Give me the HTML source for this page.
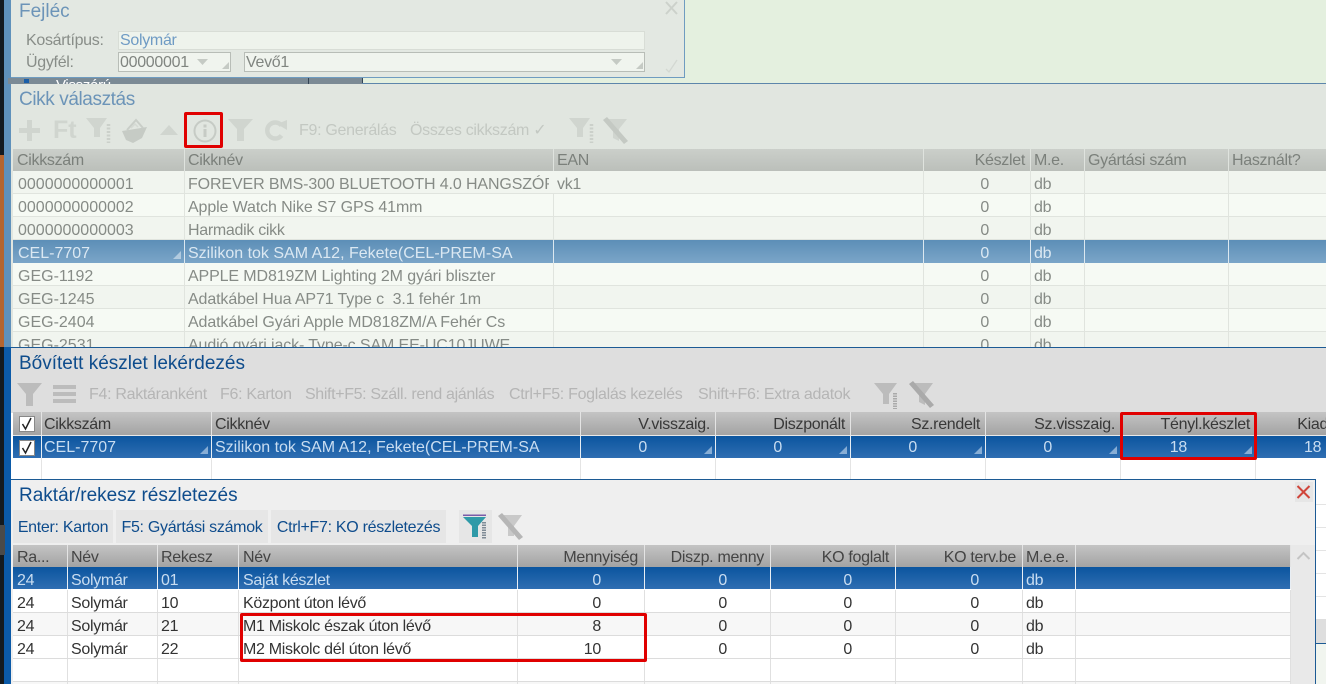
<!DOCTYPE html>
<html lang="hu"><head><meta charset="utf-8"><title>Készlet</title>
<style>
html,body{margin:0;padding:0;width:1326px;height:684px;overflow:hidden;background:#fff}
body{position:relative;font-family:"Liberation Sans",Arial,sans-serif;font-size:16px;letter-spacing:-.3px}
.a{position:absolute;white-space:nowrap}
.r{position:absolute;display:grid;box-sizing:border-box;line-height:27px;grid-template-rows:minmax(0,1fr)}
.r>div{position:relative;padding:0 5px 0 3px;border-right:1px solid;overflow:hidden;white-space:nowrap}
.r>div:first-child{padding-left:4px}
.n{text-align:right}
.l{letter-spacing:0}
.m{letter-spacing:-.12px}
.t:after{content:"";position:absolute;right:3px;bottom:4px;border:4px solid transparent;border-right-color:currentColor;border-bottom-color:currentColor;opacity:.6}
.ttl{position:absolute;left:19px;font-size:19px;line-height:21px;letter-spacing:0;white-space:nowrap}
.g1{left:13px;width:1313px;grid-template-columns:172px 369px 370px 107px 54px 144px 98px}
.g1>div:first-child{padding-left:5px}
.g1.h{background:linear-gradient(#cbcfca,#bbbfba);color:#7b807b;height:22px;top:149px;line-height:24px}
.g1.h>div{border-color:#dfe3de}
.g1.h>div:first-child{padding-left:4px}
.g1.b{color:#868b86;height:23px;border-bottom:1px solid #e0e4de}
.g1.b>div{border-color:#e0e4de}
.g1.b.x{background:#f1f5ef}.g1.b.y{background:#f6faf4}
.g1.s{background:linear-gradient(#5c8eb7,#7ba5c8);color:#dbe8f2;height:23px}
.g1.s>div{border-color:#dce8f0}
.v{padding-right:41px!important}
.g2{left:13px;width:1351px;grid-template-columns:29px 170px 369px 135px 135px 135px 135px 135px 108px}
.g2>div:nth-child(2){padding-left:2px}
.g2.h{background:linear-gradient(#c4c4c4,#a3a3a3);color:#383838;height:23px;top:412px;line-height:26px}
.g2.h>div{border-color:#e4e4e4}
.g2.s{background:linear-gradient(#0b559f,#2f6eb2);color:#c9ddf1;height:23px;top:435px;border-top:1px solid #e8e8e8;line-height:24px}
.g2.s>div{border-color:#e8eef4}
.w{padding-right:68px!important}
.g3{left:13px;width:1278px;grid-template-columns:55px 90px 81px 279px 127px 126px 125px 127px 53px 215px}
.g3>div:nth-child(4){padding-left:4px}
.g3.h{background:linear-gradient(#c4c4c4,#a3a3a3);color:#444;height:22px;top:545px;line-height:26px}
.g3.h>div{border-color:#e4e4e4}
.g3.h>div.n{padding-right:6px}
.g3.b{color:#333;height:23px;border-bottom:1px solid #dcdcdc}
.g3.b>div{border-color:#e0e0e0}
.g3.s{background:linear-gradient(#0b559f,#2f6eb2);color:#c9ddf1;height:23px;top:567px;border-bottom:1px solid #fff}
.g3.s>div{border-color:#e8eef4}
.q{padding-right:43px!important}
.btn{position:absolute;top:510px;height:33px;line-height:36px;background:#e6e6e6;color:#0e4c8c;text-align:center;white-space:nowrap}
.rb{position:absolute;box-sizing:border-box;border:3px solid #e00000;border-radius:2px}
.cb{position:absolute;width:14px;height:14px;background:#fff;border:1px solid #888}
</style></head><body>

<!-- left edge -->
<div class="a" style="left:0;top:0;width:11px;height:684px;background:#141a1f"></div>
<div class="a" style="left:0;top:155px;width:4px;height:192px;background:#b4652f"></div>
<div class="a" style="left:4px;top:0;width:7px;height:347px;background:#5f91bb"></div>
<div class="a" style="left:4px;top:347px;width:7px;height:337px;background:#0b5aa8"></div>
<div class="a" style="left:0;top:525px;width:5px;height:30px;background:#4a4a4a"></div>

<!-- background green -->
<div class="a" style="left:11px;top:0;width:1315px;height:84px;background:#e4f0df"></div>
<div class="a" style="left:8px;top:78px;width:354px;height:6px;background:#7b8a95;overflow:hidden;color:#fff;font-size:15px;line-height:15px"><span style="position:absolute;left:48px;top:0">Visszárú</span><span style="position:absolute;left:16px;top:1px;width:5px;height:4px;background:#1a5ea8"></span></div>
<div class="a" style="left:308px;top:78px;width:1px;height:6px;background:#345"></div>
<div class="a" style="left:362px;top:78px;width:1px;height:6px;background:#345"></div>
<div class="a" style="left:362px;top:83px;width:964px;height:1px;background:#5d86ab"></div>

<!-- Fejléc -->
<div class="a" style="left:11px;top:0;width:674px;height:78px;box-sizing:border-box;background:#e3e8e2;border-right:1px solid #6f9cc0;border-bottom:1px solid #6f9cc0"></div>
<div class="ttl" style="top:1px;color:#6c94b8">Fejléc</div>
<svg class="a" style="left:664px;top:0" width="16" height="16"><path d="M2 2L13 14M13 2L2 14" stroke="#ccd1cb" stroke-width="2"/></svg>
<div class="a" style="left:26px;top:32px;line-height:18px;color:#888d88">Kosártípus:</div>
<div class="a" style="left:26px;top:54px;line-height:18px;color:#888d88">Ügyfél:</div>
<div class="a" style="left:118px;top:31px;width:527px;height:19px;box-sizing:border-box;background:#eef3ec;border:1px solid #d8ddd6;line-height:18px;padding-left:1px;color:#6f9bc4">Solymár</div>
<div class="a" style="left:118px;top:52px;width:113px;height:20px;box-sizing:border-box;background:#f0f4ee;border:1px solid #b8bdb7;line-height:20px;padding-left:1px;color:#808580">00000001</div>
<div class="a" style="left:244px;top:52px;width:401px;height:20px;box-sizing:border-box;background:#f0f4ee;border:1px solid #b8bdb7;line-height:20px;padding-left:1px;color:#808580">Vevő1</div>
<svg class="a" style="left:196px;top:56px" width="36" height="16"><path d="M1 3h11l-5.500 6z" fill="#c5cac4"/><path d="M33 13h-7l7-7z" fill="#c5cac4"/></svg>
<svg class="a" style="left:610px;top:56px" width="36" height="16"><path d="M1 3h11l-5.500 6z" fill="#c5cac4"/><path d="M33 13h-7l7-7z" fill="#c5cac4"/></svg>
<svg class="a" style="left:664px;top:58px" width="16" height="16"><path d="M2 11L5 14L13 2" fill="none" stroke="#d3d8d2" stroke-width="1.300"/></svg>

<!-- Cikk választás -->
<div class="a" style="left:11px;top:84px;width:1315px;height:263px;background:#e1e6e0"></div>
<div class="ttl" style="top:89px;color:#6c94b8;letter-spacing:-.4px">Cikk választás</div>

<svg class="a" style="left:14px;top:110px" width="640" height="38">
<g fill="#d0d5cf">
<!-- plus -->
<path d="M13 10h5v8h8v5h-8v8h-5v-8h-8v-5h8z"/>
<!-- filter with ruler -->
<path d="M72 8h21l-7 10v9h-6v-9z"/>
<line x1="94.500" y1="14" x2="94.500" y2="33" stroke="#cbd0ca" stroke-width="3.500" stroke-dasharray="2 1.500"/>
<!-- basket -->
<path d="M108 21l25-4-5 11-9 5-7-3z" fill="#c6cbc5"/>
<path d="M113 20l9-10 7 8" fill="none" stroke="#c9cec8" stroke-width="2"/>
<path d="M117 18l4-4 3 3" fill="none" stroke="#d4d9d3" stroke-width="1.500"/>
<!-- triangle -->
<path d="M146 25l9-10 9 10z"/>
<!-- funnel -->
<path d="M214 9h25l-9 10v12h-7v-12z"/>
<!-- redo -->
<path d="M267.500 15.500a8 8 0 1 0 0 10" fill="none" stroke="#d0d5cf" stroke-width="4.500"/>
<path d="M263 14l10-4v10z"/>
<!-- filter ruler right -->
<path d="M555 8h21l-7 10v9h-6v-9z"/>
<line x1="577.500" y1="14" x2="577.500" y2="33" stroke="#cbd0ca" stroke-width="3.500" stroke-dasharray="2 1.500"/>
<!-- filter X right -->
<path d="M590 9h23l-8 10v12l-6-3v-9z"/><path d="M589 10l4-3 21 24-4 3z" fill="#c4c9c3"/>
</g>
<circle cx="191" cy="21" r="10.500" fill="none" stroke="#c6cbc5" stroke-width="2"/>
<rect x="189.500" y="19" width="3" height="8" fill="#c6cbc5"/><rect x="189.500" y="14.500" width="3" height="3" fill="#c6cbc5"/>
</svg>
<div class="a" style="left:53px;top:116px;font-size:25px;line-height:28px;font-weight:bold;color:#d0d5cf;letter-spacing:0">Ft</div>
<div class="a" style="left:299px;top:122px;line-height:18px;color:#c3c8c2">F9: Generálás</div>
<div class="a" style="left:410px;top:122px;line-height:18px;color:#c3c8c2">Összes cikkszám ✓</div>
<div class="rb" style="left:184px;top:112px;width:39px;height:36px"></div>

<div class="r g1 h"><div>Cikkszám</div><div>Cikknév</div><div>EAN</div><div class="n">Készlet</div><div>M.e.</div><div>Gyártási szám</div><div>Használt?</div></div>
<div class="r g1 b x" style="top:171px"><div class="l">0000000000001</div><div class="m" style="clip-path:inset(0 5px 0 0)">FOREVER BMS-300 BLUETOOTH 4.0 HANGSZÓRÓ</div><div>vk1</div><div class="n v">0</div><div>db</div><div></div><div></div></div>
<div class="r g1 b y" style="top:194px"><div class="l">0000000000002</div><div class="m">Apple Watch Nike S7 GPS 41mm</div><div></div><div class="n v">0</div><div>db</div><div></div><div></div></div>
<div class="r g1 b x" style="top:217px"><div class="l">0000000000003</div><div>Harmadik cikk</div><div></div><div class="n v">0</div><div>db</div><div></div><div></div></div>
<div class="r g1 s" style="top:240px"><div class="t l">CEL-7707</div><div class="l">Szilikon tok SAM A12, Fekete(CEL-PREM-SA</div><div></div><div class="n v">0</div><div>db</div><div></div><div></div></div>
<div class="r g1 b y" style="top:263px"><div class="l">GEG-1192</div><div class="m">APPLE MD819ZM Lighting 2M gyári bliszter</div><div></div><div class="n v">0</div><div>db</div><div></div><div></div></div>
<div class="r g1 b x" style="top:286px"><div class="l">GEG-1245</div><div class="m" style="white-space:pre">Adatkábel Hua AP71 Type c  3.1 fehér 1m</div><div></div><div class="n v">0</div><div>db</div><div></div><div></div></div>
<div class="r g1 b y" style="top:309px"><div class="l">GEG-2404</div><div class="m">Adatkábel Gyári Apple MD818ZM/A Fehér Cs</div><div></div><div class="n v">0</div><div>db</div><div></div><div></div></div>
<div class="r g1 b x" style="top:332px"><div class="l">GEG-2531</div><div class="m">Audió gyári jack- Type-c SAM EE-UC10JUWE</div><div></div><div class="n v">0</div><div>db</div><div></div><div></div></div>

<!-- Bővített készlet -->
<div class="a" style="left:11px;top:347px;width:1315px;height:66px;background:#dedede;border-top:1px solid #1c5a94;box-sizing:border-box"></div>
<div class="ttl" style="top:353px;color:#0e4c8c">Bővített készlet lekérdezés</div>
<svg class="a" style="left:14px;top:380px" width="930" height="30">
<g fill="#bcbcbc">
<path d="M3 3h25l-9 11v12h-7v-12z"/>
<rect x="39" y="5" width="23" height="4"/><rect x="39" y="12" width="23" height="4"/><rect x="39" y="19" width="23" height="4"/>
<path d="M860 3h23l-8 11v10h-6v-10z"/>
<line x1="881" y1="13" x2="881" y2="29" stroke="#aaa" stroke-width="4" stroke-dasharray="1.500 1"/>
<path d="M896 3h23l-8 11v11l-6-3v-8z"/><path d="M895 4l4-3 21 24-4 3z" fill="#aaa"/>
</g>
</svg>
<div class="a" style="left:89px;top:386px;line-height:18px;color:#b5b5b5">F4: Raktáranként</div>
<div class="a" style="left:220px;top:386px;line-height:18px;color:#b5b5b5">F6: Karton</div>
<div class="a" style="left:305px;top:386px;line-height:18px;color:#b5b5b5;letter-spacing:-.36px">Shift+F5: Száll. rend ajánlás</div>
<div class="a" style="left:509px;top:386px;line-height:18px;color:#b5b5b5">Ctrl+F5: Foglalás kezelés</div>
<div class="a" style="left:698px;top:386px;line-height:18px;color:#b5b5b5">Shift+F6: Extra adatok</div>

<div class="r g2 h"><div></div><div>Cikkszám</div><div>Cikknév</div><div class="n">V.visszaig.</div><div class="n">Diszponált</div><div class="n">Sz.rendelt</div><div class="n">Sz.visszaig.</div><div class="n">Tényl.készlet</div><div class="n">Kiadható</div></div>
<div class="r g2 s"><div></div><div class="t l">CEL-7707</div><div class="l">Szilikon tok SAM A12, Fekete(CEL-PREM-SA</div><div class="n t w">0</div><div class="n t w">0</div><div class="n t w">0</div><div class="n t w">0</div><div class="n t w">18</div><div style="padding-left:48px">18</div></div>
<div class="a" style="left:11px;top:458px;width:1315px;height:21px;background:#fff"></div>
<div class="a" style="left:41px;top:458px;width:1px;height:21px;background:#e4e4e4"></div>
<div class="a" style="left:211px;top:458px;width:1px;height:21px;background:#e4e4e4"></div>
<div class="a" style="left:580px;top:458px;width:1px;height:21px;background:#e4e4e4"></div>
<div class="a" style="left:715px;top:458px;width:1px;height:21px;background:#e4e4e4"></div>
<div class="a" style="left:850px;top:458px;width:1px;height:21px;background:#e4e4e4"></div>
<div class="a" style="left:985px;top:458px;width:1px;height:21px;background:#e4e4e4"></div>
<div class="a" style="left:1120px;top:458px;width:1px;height:21px;background:#e4e4e4"></div>
<div class="a" style="left:1255px;top:458px;width:1px;height:21px;background:#e4e4e4"></div>
<div class="cb" style="left:19px;top:416px"></div>
<div class="cb" style="left:19px;top:440px"></div>
<svg class="a" style="left:19px;top:416px" width="16" height="16"><path d="M3.500 8L6.500 13L12 2" fill="none" stroke="#222" stroke-width="1.500"/></svg>
<svg class="a" style="left:19px;top:440px" width="16" height="16"><path d="M3.500 8L6.500 13L12 2" fill="none" stroke="#222" stroke-width="1.500"/></svg>
<div class="rb" style="left:1120px;top:412px;width:137px;height:48px"></div>

<!-- right underlay -->
<div class="a" style="left:1315px;top:479px;width:11px;height:205px;background:#fff"></div>
<div class="a" style="left:1316px;top:504px;width:10px;height:1px;background:#e4e4e4"></div>
<div class="a" style="left:1316px;top:527px;width:10px;height:1px;background:#e4e4e4"></div>
<div class="a" style="left:1316px;top:550px;width:10px;height:1px;background:#e4e4e4"></div>
<div class="a" style="left:1316px;top:573px;width:10px;height:1px;background:#e4e4e4"></div>
<div class="a" style="left:1316px;top:596px;width:10px;height:1px;background:#e4e4e4"></div>
<div class="a" style="left:1316px;top:619px;width:10px;height:24px;background:#dedede"></div>
<div class="a" style="left:1316px;top:643px;width:10px;height:41px;background:#f1f5ef;border-top:1px solid #1c5a94;box-sizing:border-box"></div>

<!-- Raktár/rekesz -->
<div class="a" style="left:11px;top:479px;width:1305px;height:205px;box-sizing:border-box;background:#efefef;border-top:1px solid #1c5a94;border-right:1px solid #1c5a94"></div>
<div class="ttl" style="top:485px;color:#0e4c8c">Raktár/rekesz részletezés</div>
<div class="a" style="left:1295px;top:482px;width:18px;height:20px;background:#e6e6e6"></div>
<svg class="a" style="left:1296px;top:485px" width="15" height="14"><path d="M1.500 1L13.500 13M13.500 1L1.500 13" stroke="#d0453a" stroke-width="2"/></svg>
<div class="btn" style="left:13px;width:100px">Enter: Karton</div>
<div class="btn" style="left:116px;width:152px">F5: Gyártási számok</div>
<div class="btn" style="left:271px;width:175px">Ctrl+F7: KO részletezés</div>
<div class="a" style="left:459px;top:510px;width:33px;height:33px;background:#e6e6e6"></div>
<svg class="a" style="left:459px;top:510px" width="70" height="33">
<rect x="4" y="4.500" width="23" height="1.500" fill="#7a5ca8"/>
<path d="M4 7h23l-8 9v11h-6v-11z" fill="#2f9aa8"/>
<line x1="25" y1="12" x2="25" y2="29" stroke="#7f8b95" stroke-width="4" stroke-dasharray="1.500 1"/>
<path d="M40 5h23l-8 11v10h-6v-10z" fill="#c9c9c9"/><path d="M39 6l4-3 21 24-4 3z" fill="#b6b6b6"/>
</svg>

<div class="r g3 h"><div>Ra...</div><div>Név</div><div>Rekesz</div><div>Név</div><div class="n">Mennyiség</div><div class="n">Diszp. menny</div><div class="n">KO foglalt</div><div class="n">KO terv.be</div><div>M.e.e.</div><div></div></div>
<div class="r g3 s"><div>24</div><div>Solymár</div><div>01</div><div>Saját készlet</div><div class="n q">0</div><div class="n q">0</div><div class="n q">0</div><div class="n q">0</div><div>db</div><div></div></div>
<div class="r g3 b" style="top:590px;background:#fff"><div>24</div><div>Solymár</div><div>10</div><div>Központ úton lévő</div><div class="n q">0</div><div class="n q">0</div><div class="n q">0</div><div class="n q">0</div><div>db</div><div></div></div>
<div class="r g3 b" style="top:613px;background:#f7f7f7"><div>24</div><div>Solymár</div><div>21</div><div>M1 Miskolc észak úton lévő</div><div class="n q">8</div><div class="n q">0</div><div class="n q">0</div><div class="n q">0</div><div>db</div><div></div></div>
<div class="r g3 b" style="top:636px;background:#fff"><div>24</div><div>Solymár</div><div>22</div><div>M2 Miskolc dél úton lévő</div><div class="n q">10</div><div class="n q">0</div><div class="n q">0</div><div class="n q">0</div><div>db</div><div></div></div>
<div class="r g3 b" style="top:659px;background:#fff"><div></div><div></div><div></div><div></div><div></div><div></div><div></div><div></div><div></div><div></div></div>
<div class="r g3 b" style="top:682px;background:#f7f7f7"><div></div><div></div><div></div><div></div><div></div><div></div><div></div><div></div><div></div><div></div></div>
<div class="a" style="left:1291px;top:545px;width:24px;height:139px;background:#e9e9e9"></div>
<svg class="a" style="left:1296px;top:551px" width="15" height="10"><path d="M1.500 8L7.500 2L13.500 8" fill="none" stroke="#c4c4c4" stroke-width="2"/></svg>
<div class="rb" style="left:240px;top:613px;width:407px;height:49px"></div>
</body></html>
